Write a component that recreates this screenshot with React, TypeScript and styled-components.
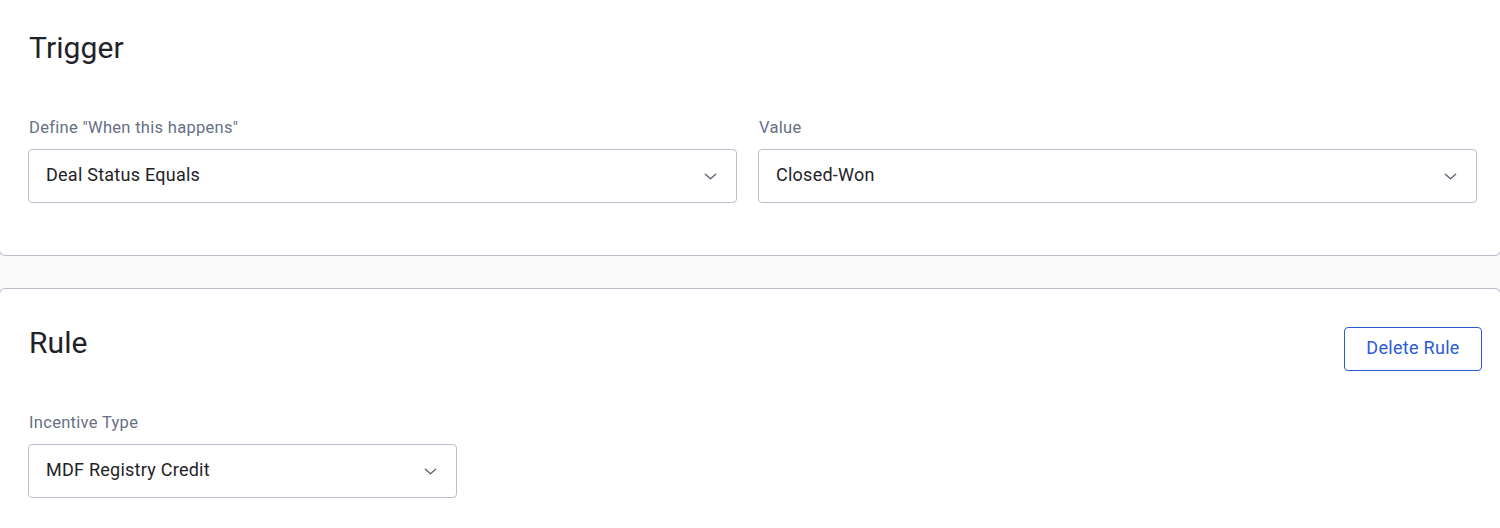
import * as React from "react";
import styled, { createGlobalStyle } from "styled-components";

const borderGray = "#b9c0cc";
const labelGray = "#667085";
const textDark = "#1f2329";
const blue = "#2a5bd7";

const Global = createGlobalStyle`
  html, body {
    margin: 0;
    padding: 0;
    background: #fafafb;
    font-family: Roboto, "Liberation Sans", Arial, sans-serif;
    overflow: hidden;
  }
`;

const Page = styled.div`
  width: 1500px;
  height: 528px;
  overflow: hidden;
  display: flex;
  flex-direction: column;
  gap: 32px;
`;

const Card = styled.section<{ $position: "top" | "bottom" }>`
  background: #fff;
  margin: 0 -1px;
  border: 1px solid ${borderGray};
  ${(p) =>
    p.$position === "top"
      ? `border-top: none; border-radius: 0 0 6px 6px; height: 256px;`
      : `border-bottom: none; border-radius: 6px 6px 0 0; flex: 1;`}
  padding: 0 23px 0 28px;
  box-sizing: border-box;
`;

const Header = styled.div<{ $top: number }>`
  display: flex;
  align-items: center;
  justify-content: space-between;
  padding-top: ${(p) => p.$top}px;
  height: 44px;
`;

const Title = styled.h2`
  margin: 0 0 0 1px;
  font-size: 30px;
  font-weight: 400;
  color: ${textDark};
  letter-spacing: 0.1px;
`;

const FieldRow = styled.div`
  display: flex;
  gap: 21px;
  margin-top: 49px;
`;

const Field = styled.div<{ $width?: number }>`
  display: flex;
  flex-direction: column;
  gap: 12px;
  ${(p) => (p.$width ? `width: ${p.$width}px; flex: none;` : `flex: 1;`)}
`;

const Label = styled.label`
  font-size: 16.5px;
  color: ${labelGray};
  line-height: 19px;
  letter-spacing: 0.3px;
  padding-left: 1px;
`;

const SelectBox = styled.div`
  height: 54px;
  box-sizing: border-box;
  border: 1px solid ${borderGray};
  border-radius: 4px;
  display: flex;
  align-items: center;
  justify-content: space-between;
  padding: 0 18px 3px 17px;
  font-size: 18px;
  letter-spacing: 0.25px;
  color: ${textDark};
  background: #fff;
`;

const Chevron = styled.svg`
  width: 15px;
  height: 15px;
  margin-top: 3px;
  color: #5c6678;
`;

const OutlineButton = styled.button`
  width: 138px;
  height: 44px;
  box-sizing: border-box;
  padding: 0 0 3px;
  border: 1px solid ${blue};
  border-radius: 4px;
  background: #fff;
  color: ${blue};
  font-family: inherit;
  font-size: 18px;
  letter-spacing: 0.3px;
  margin-right: -5px;
  margin-top: 14px;
`;

const Select = ({ value }: { value: string }) => (
  <SelectBox>
    <span>{value}</span>
    <Chevron viewBox="0 0 16 16" fill="none">
      <path d="M2.5 5.5 L8 10.5 L13.5 5.5" stroke="currentColor" strokeWidth="1.5" strokeLinecap="round" strokeLinejoin="round" />
    </Chevron>
  </SelectBox>
);

export default function App() {
  return (
    <Page>
      <Global />
      <Card $position="top">
        <Header $top={25}>
          <Title>Trigger</Title>
        </Header>
        <FieldRow>
          <Field $width={709}>
            <Label>Define "When this happens"</Label>
            <Select value="Deal Status Equals" />
          </Field>
          <Field>
            <Label>Value</Label>
            <Select value="Closed-Won" />
          </Field>
        </FieldRow>
      </Card>
      <Card $position="bottom">
        <Header $top={31}>
          <Title>Rule</Title>
          <OutlineButton>Delete Rule</OutlineButton>
        </Header>
        <FieldRow>
          <Field $width={429}>
            <Label>Incentive Type</Label>
            <Select value="MDF Registry Credit" />
          </Field>
        </FieldRow>
      </Card>
    </Page>
  );
}
